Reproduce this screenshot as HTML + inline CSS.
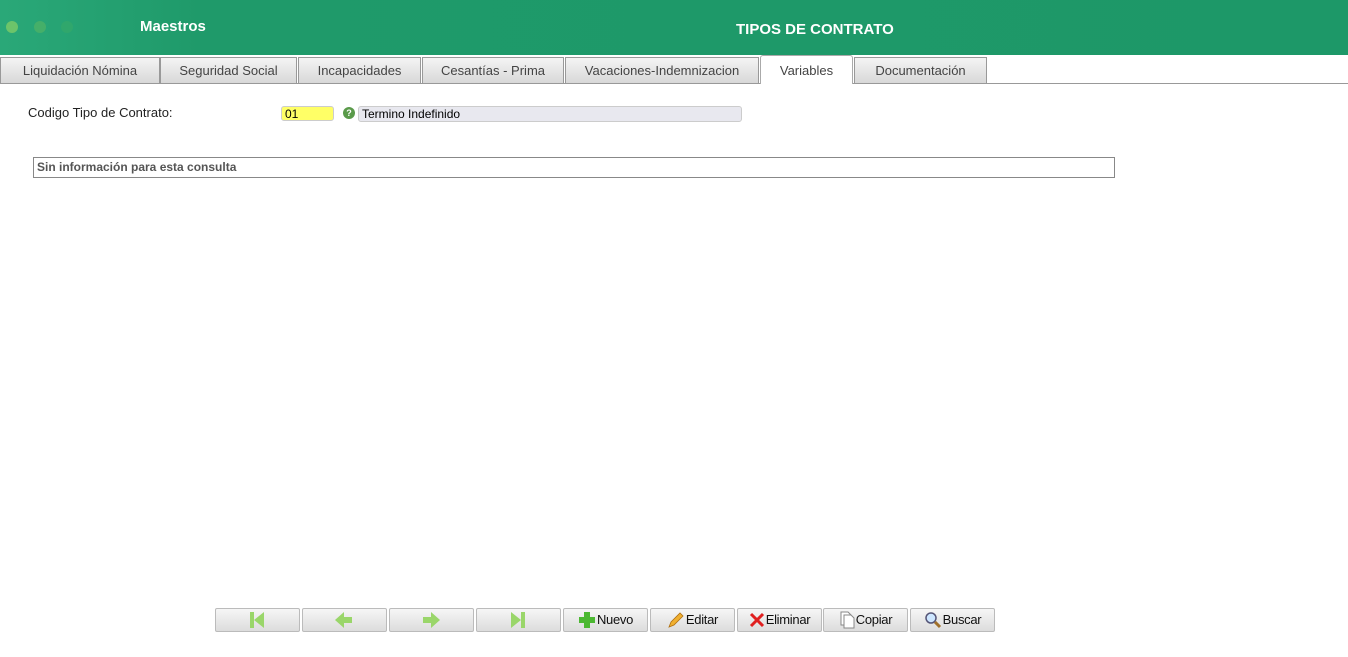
<!DOCTYPE html>
<html><head><meta charset="utf-8"><style>
body{margin:0;width:1348px;height:657px;background:#fff;font-family:"Segoe UI","Liberation Sans",sans-serif;position:relative;overflow:hidden}
.hdr{position:absolute;left:0;top:0;width:1348px;height:55px;background:linear-gradient(90deg,#2aa878 0,#1f9a6a 200px,#1d9868 100%)}
.dot{position:absolute;top:21px;width:12px;height:12px;border-radius:6px}
.t1{position:absolute;left:140px;top:18px;color:#fff;font-weight:bold;font-size:15px}
.t2{position:absolute;left:736px;top:21px;color:#fff;font-weight:bold;font-size:15px}
.tab{position:absolute;top:57px;border:1px solid #999;border-bottom:none;background:linear-gradient(#f4f4f4,#d8d8d8);font-size:13px;color:#444;text-align:center;line-height:25px;box-sizing:border-box;height:26px}
.tab.act{background:#fff;border-color:#aaa;top:55px;height:29px;line-height:29px;border-radius:3px 3px 0 0}
.line{position:absolute;left:0;top:83px;width:1348px;height:1px;background:#999}
.lbl{position:absolute;left:28px;top:105px;font-size:13px;color:#222}
.in1{position:absolute;left:281px;top:106px;width:53px;height:15px;background:#ffff66;border:1px solid #ccc;border-radius:3px;font:12px "Liberation Sans",sans-serif;line-height:15px;padding-left:3px;box-sizing:border-box}
.q{position:absolute;left:343px;top:107px;width:12px;height:12px;border-radius:6px;background:#5a9a4a;color:#fff;font:bold 9px "Liberation Sans";text-align:center;line-height:12px}
.in2{position:absolute;left:358px;top:106px;width:384px;height:16px;background:#e8e8ef;border:1px solid #ccc;border-radius:3px;font:12px "Liberation Sans",sans-serif;line-height:15px;padding-left:3px;box-sizing:border-box}
.box{position:absolute;left:33px;top:157px;width:1082px;height:21px;border:1px solid #888;box-sizing:border-box;font:bold 12px "Liberation Sans",sans-serif;color:#555;line-height:19px;padding-left:3px}
.b{position:absolute;top:608px;width:85px;height:24px;border:1px solid #bbb;border-radius:2px;background:linear-gradient(#f6f6f6,#dcdcdc);box-sizing:border-box;font:13px "Liberation Sans",sans-serif;color:#111;line-height:22px;display:flex;align-items:center;justify-content:center;letter-spacing:-0.3px}
.b svg{margin-right:1px}
</style></head><body>
<div class="hdr">
<div class="dot" style="left:6px;background:#6cc46a"></div>
<div class="dot" style="left:34px;background:#4cb266;opacity:.8"></div>
<div class="dot" style="left:61px;background:#35a86a;opacity:.7"></div>
<div class="t1">Maestros</div><div class="t2">TIPOS DE CONTRATO</div></div>
<div class="tab" style="left:0;width:160px">Liquidación Nómina</div>
<div class="tab" style="left:160px;width:137px">Seguridad Social</div>
<div class="tab" style="left:298px;width:123px">Incapacidades</div>
<div class="tab" style="left:422px;width:142px">Cesantías - Prima</div>
<div class="tab" style="left:565px;width:194px">Vacaciones-Indemnizacion</div>
<div class="line"></div>
<div class="tab act" style="left:760px;width:93px">Variables</div>
<div class="tab" style="left:854px;width:133px">Documentación</div>
<div class="lbl">Codigo Tipo de Contrato:</div>
<div class="in1">01</div><div class="q">?</div>
<div class="in2">Termino Indefinido</div>
<div class="box">Sin información para esta consulta</div>
<div class="b" style="left:215px"><svg width="18" height="18"><rect x="2" y="1" width="4" height="16" fill="#9ad66a"/><path d="M16 1L6 9l10 8z" fill="#9ad66a"/></svg></div>
<div class="b" style="left:302px"><svg width="20" height="18"><path d="M1 9l9-8v5h8v6h-8v5z" fill="#9ad66a"/></svg></div>
<div class="b" style="left:389px"><svg width="20" height="18"><path d="M19 9l-9-8v5H2v6h8v5z" fill="#9ad66a"/></svg></div>
<div class="b" style="left:476px"><svg width="18" height="18"><rect x="12" y="1" width="4" height="16" fill="#9ad66a"/><path d="M2 1l10 8-10 8z" fill="#9ad66a"/></svg></div>
<div class="b" style="left:563px"><svg width="18" height="18"><path d="M6 1h6v5h5v6h-5v5H6v-5H1V6h5z" fill="#4cb832"/></svg>Nuevo</div>
<div class="b" style="left:650px"><svg width="18" height="18"><path d="M2 16l2-5L13 2l3 3-9 9z" fill="#f0b030" stroke="#b07010" stroke-width=".8"/></svg>Editar</div>
<div class="b" style="left:737px"><svg width="16" height="16"><path d="M2 2l12 12M14 2L2 14" stroke="#e02020" stroke-width="3"/></svg>Eliminar</div>
<div class="b" style="left:823px"><svg width="16" height="18"><path d="M2 1h7l3 3v10H2z" fill="#fff" stroke="#888"/><path d="M5 4h7l3 3v10H5z" fill="#fff" stroke="#888"/></svg>Copiar</div>
<div class="b" style="left:910px"><svg width="18" height="18"><circle cx="7" cy="7" r="5" fill="#cde6ff" stroke="#557" stroke-width="1.5"/><path d="M11 11l5 5" stroke="#a0702a" stroke-width="3"/></svg>Buscar</div>
</body></html>
